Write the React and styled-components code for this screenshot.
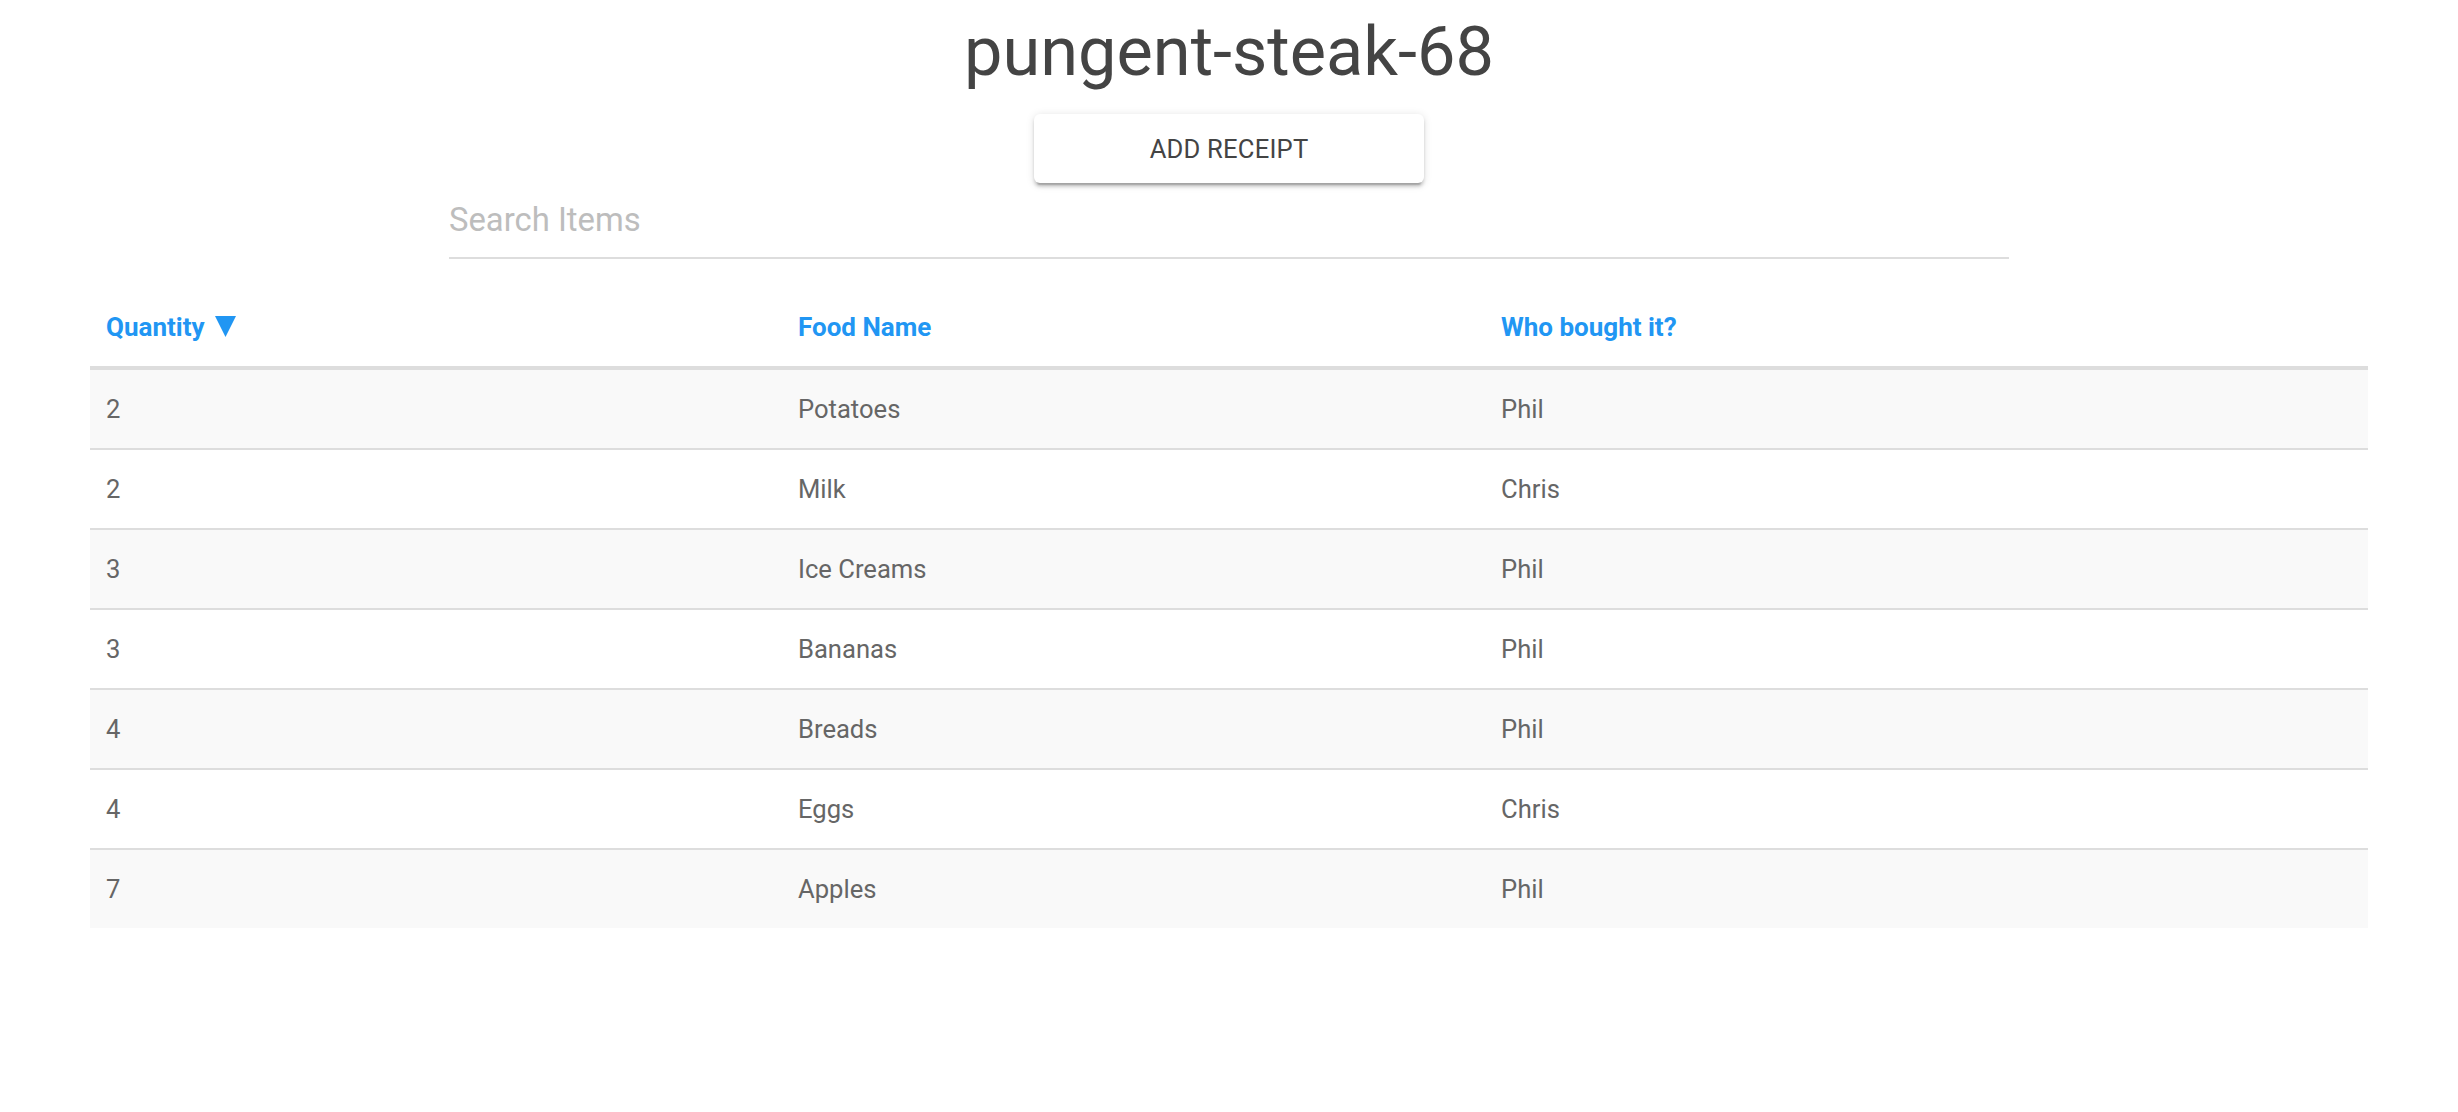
import React from "react";
import styled, { createGlobalStyle } from "styled-components";

const GlobalStyle = createGlobalStyle`
  html, body {
    margin: 0;
    padding: 0;
    background: #ffffff;
    font-family: Roboto, "Noto Sans", "Liberation Sans", sans-serif;
  }
`;

const Page = styled.main`
  display: flex;
  flex-direction: column;
  align-items: center;
  width: 100%;
`;

const Title = styled.h1`
  margin: 10px 0 0;
  font-size: 68.5px;
  line-height: 84px;
  font-weight: 400;
  color: #444444;
`;

const AddButton = styled.button`
  margin-top: 20px;
  width: 390px;
  height: 69px;
  border: none;
  border-radius: 6px;
  background: #ffffff;
  color: #444444;
  font-family: inherit;
  font-size: 25.6px;
  font-weight: 400;
  text-transform: uppercase;
  letter-spacing: 0.2px;
  cursor: pointer;
  box-shadow: 0 4.8px 1.6px -3.2px rgba(0, 0, 0, 0.2),
    0 3.2px 3.2px 0 rgba(0, 0, 0, 0.14), 0 1.6px 8px 0 rgba(0, 0, 0, 0.12);
`;

const SearchInput = styled.input`
  box-sizing: content-box;
  width: 1560px;
  height: 74px;
  padding: 0;
  margin: 0;
  border: none;
  border-bottom: 2px solid #dddddd;
  outline: none;
  background: transparent;
  font-family: inherit;
  font-size: 32.8px;
  color: #444444;
  &::placeholder {
    color: #bdbdbd;
  }
`;

const Table = styled.table`
  margin: 29px 0 0;
  width: 2278px;
  border-collapse: separate;
  border-spacing: 0;
  table-layout: fixed;
`;

const Col = styled.col`
  width: ${(p) => p.$w};
`;

const HeadCell = styled.th`
  height: 78px;
  padding: 0 16px;
  text-align: left;
  vertical-align: middle;
  font-size: 26px;
  font-weight: 700;
  color: #2196f3;
  border-bottom: 4px solid #dddddd;
  white-space: nowrap;
`;

const SortIcon = styled.svg`
  display: inline-block;
  width: 21px;
  height: 21px;
  margin-left: 10px;
  vertical-align: -1px;
`;

const Row = styled.tr`
  background: ${(p) => (p.$odd ? "#f9f9f9" : "#ffffff")};
  &:last-child td {
    border-bottom: none;
    height: 78px;
  }
`;

const Cell = styled.td`
  height: 78px;
  padding: 0 16px;
  vertical-align: middle;
  font-size: 25.6px;
  font-weight: 400;
  color: #666666;
  border-bottom: 2px solid #dddddd;
`;

const items = [
  { qty: 2, name: "Potatoes", who: "Phil" },
  { qty: 2, name: "Milk", who: "Chris" },
  { qty: 3, name: "Ice Creams", who: "Phil" },
  { qty: 3, name: "Bananas", who: "Phil" },
  { qty: 4, name: "Breads", who: "Phil" },
  { qty: 4, name: "Eggs", who: "Chris" },
  { qty: 7, name: "Apples", who: "Phil" },
];

export default function App() {
  return (
    <>
      <GlobalStyle />
      <Page>
        <Title>pungent-steak-68</Title>
        <AddButton type="button">Add Receipt</AddButton>
        <SearchInput type="text" placeholder="Search Items" />
        <Table>
          <colgroup>
            <Col $w="692px" />
            <Col $w="703px" />
            <Col $w="auto" />
          </colgroup>
          <thead>
            <tr>
              <HeadCell>
                Quantity
                <SortIcon viewBox="0 0 21 21" aria-hidden="true">
                  <polygon points="0,0 21,0 10.5,21" fill="#2196f3" />
                </SortIcon>
              </HeadCell>
              <HeadCell>Food Name</HeadCell>
              <HeadCell>Who bought it?</HeadCell>
            </tr>
          </thead>
          <tbody>
            {items.map((it, i) => (
              <Row key={i} $odd={i % 2 === 0}>
                <Cell>{it.qty}</Cell>
                <Cell>{it.name}</Cell>
                <Cell>{it.who}</Cell>
              </Row>
            ))}
          </tbody>
        </Table>
      </Page>
    </>
  );
}
